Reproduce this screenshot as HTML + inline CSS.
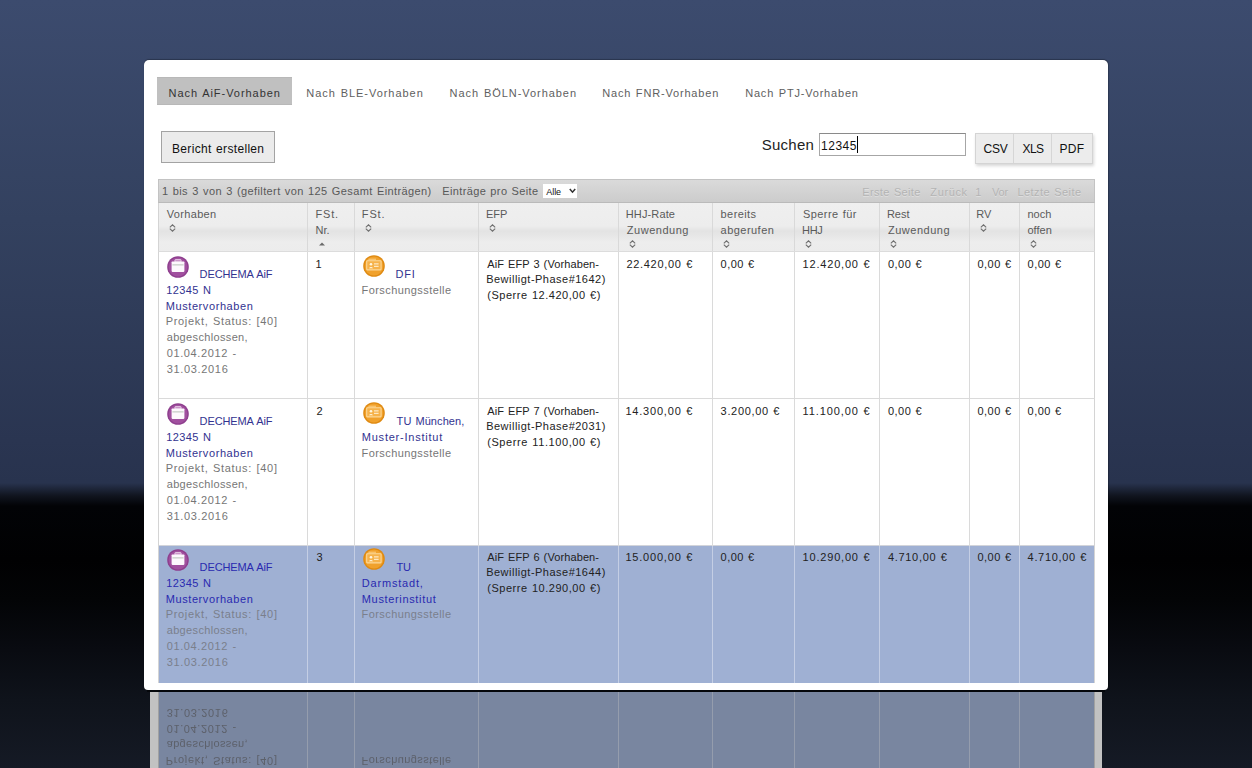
<!DOCTYPE html>
<html><head><meta charset="utf-8">
<style>
*{box-sizing:border-box}
html,body{margin:0;padding:0;width:1252px;height:768px;overflow:hidden}
body{position:relative;font-family:"Liberation Sans",sans-serif;
background:linear-gradient(to bottom,#3c4b6e 0px,#33415f 220px,#2a3551 440px,#28334e 483px,#10141e 496px,#020306 506px,#010102 560px,#030406 600px,#090b11 650px,#0f131b 700px,#151a25 768px)}
.tx{position:absolute;white-space:pre;line-height:20px;font-family:"Liberation Sans",sans-serif}
.bx{position:absolute}
.card{position:absolute;left:144px;top:60px;width:964px;height:630px;background:#fff;border-radius:5px 5px 4px 4px;box-shadow:0 -1px 1px rgba(0,0,0,.25),1px 0 1px rgba(0,0,0,.2)}
.refl{position:absolute;left:150px;top:692px;width:952px;height:76px;overflow:hidden;background:#fff;filter:brightness(.76) blur(.35px)}
</style></head><body>
<div class="card"></div>
<div class="bx" style="left:147px;top:690px;width:958px;height:2px;background:#05070b"></div>
<div class="bx" style="left:157px;top:77px;width:135px;height:28px;background:#c0c0c0;border-top:1px solid #b8b8b8;border-bottom:1px solid #b8b8b8"></div>
<div class="bx" style="left:161px;top:131px;width:114px;height:32px;border:1px solid #a3a3a3;background:#ebebeb"></div>
<div class="bx" style="left:819px;top:133px;width:147px;height:23px;border:1px solid #a6a6a6;border-top-color:#8a8a8a;background:#fff"></div>
<div class="bx" style="left:857px;top:136px;width:1px;height:17px;background:#000"></div>
<div class="bx" style="left:975px;top:133px;width:118px;height:31px;background:#ececec;border:1px solid #d4d4d4;box-shadow:1px 2px 3px rgba(0,0,0,.16)"></div>
<div class="bx" style="left:1013px;top:134px;width:1px;height:29px;background:#d6d6d6"></div>
<div class="bx" style="left:1051px;top:134px;width:1px;height:29px;background:#d6d6d6"></div>
<div class="bx" style="left:158px;top:179px;width:937px;height:24px;border:1px solid #c3c3c3;border-bottom-color:#bababa;background:linear-gradient(#dadada,#d3d3d3 50%,#cccccc)"></div>
<div class="bx" style="left:543px;top:184px;width:34px;height:14px;background:#fff"></div>
<svg class="bx" style="left:568.5px;top:188px" width="7" height="6" viewBox="0 0 7 6"><path d="M0.8 1L3.5 4.2L6.2 1" fill="none" stroke="#333" stroke-width="1.5"/></svg>
<div class="bx" style="left:158px;top:203px;width:937px;height:49px;background:linear-gradient(#efefef 0,#ededed 23px,#e3e3e3 28px,#e6e6e6 32px,#ededed 39px,#ececec 49px);border-left:1px solid #d4d4d4;border-right:1px solid #d4d4d4;border-bottom:1px solid #dcdcdc"></div>
<div class="bx" style="left:307px;top:203px;width:1px;height:48px;background:#d9d9d9"></div>
<div class="bx" style="left:354px;top:203px;width:1px;height:48px;background:#d9d9d9"></div>
<div class="bx" style="left:478px;top:203px;width:1px;height:48px;background:#d9d9d9"></div>
<div class="bx" style="left:618px;top:203px;width:1px;height:48px;background:#d9d9d9"></div>
<div class="bx" style="left:712px;top:203px;width:1px;height:48px;background:#d9d9d9"></div>
<div class="bx" style="left:794px;top:203px;width:1px;height:48px;background:#d9d9d9"></div>
<div class="bx" style="left:879px;top:203px;width:1px;height:48px;background:#d9d9d9"></div>
<div class="bx" style="left:969px;top:203px;width:1px;height:48px;background:#d9d9d9"></div>
<div class="bx" style="left:1019px;top:203px;width:1px;height:48px;background:#d9d9d9"></div>
<svg class="bx" style="left:169.1px;top:224px" width="7" height="8" viewBox="0 0 7 8"><path d="M0.8 3.3L3.5 0.8L6.2 3.3" fill="none" stroke="#6e6e6e" stroke-width="1.1"/><path d="M0.8 4.7L3.5 7.2L6.2 4.7" fill="none" stroke="#6e6e6e" stroke-width="1.1"/></svg>
<svg class="bx" style="left:319px;top:242px" width="6" height="4" viewBox="0 0 6 4"><path d="M0 3.6L3 0.4L6 3.6Z" fill="#6a6a6a"/></svg>
<svg class="bx" style="left:365.2px;top:224px" width="7" height="8" viewBox="0 0 7 8"><path d="M0.8 3.3L3.5 0.8L6.2 3.3" fill="none" stroke="#6e6e6e" stroke-width="1.1"/><path d="M0.8 4.7L3.5 7.2L6.2 4.7" fill="none" stroke="#6e6e6e" stroke-width="1.1"/></svg>
<svg class="bx" style="left:489.4px;top:224px" width="7" height="8" viewBox="0 0 7 8"><path d="M0.8 3.3L3.5 0.8L6.2 3.3" fill="none" stroke="#6e6e6e" stroke-width="1.1"/><path d="M0.8 4.7L3.5 7.2L6.2 4.7" fill="none" stroke="#6e6e6e" stroke-width="1.1"/></svg>
<svg class="bx" style="left:629.2px;top:240px" width="7" height="8" viewBox="0 0 7 8"><path d="M0.8 3.3L3.5 0.8L6.2 3.3" fill="none" stroke="#6e6e6e" stroke-width="1.1"/><path d="M0.8 4.7L3.5 7.2L6.2 4.7" fill="none" stroke="#6e6e6e" stroke-width="1.1"/></svg>
<svg class="bx" style="left:723.0px;top:240px" width="7" height="8" viewBox="0 0 7 8"><path d="M0.8 3.3L3.5 0.8L6.2 3.3" fill="none" stroke="#6e6e6e" stroke-width="1.1"/><path d="M0.8 4.7L3.5 7.2L6.2 4.7" fill="none" stroke="#6e6e6e" stroke-width="1.1"/></svg>
<svg class="bx" style="left:805.4px;top:240px" width="7" height="8" viewBox="0 0 7 8"><path d="M0.8 3.3L3.5 0.8L6.2 3.3" fill="none" stroke="#6e6e6e" stroke-width="1.1"/><path d="M0.8 4.7L3.5 7.2L6.2 4.7" fill="none" stroke="#6e6e6e" stroke-width="1.1"/></svg>
<svg class="bx" style="left:890.3px;top:240px" width="7" height="8" viewBox="0 0 7 8"><path d="M0.8 3.3L3.5 0.8L6.2 3.3" fill="none" stroke="#6e6e6e" stroke-width="1.1"/><path d="M0.8 4.7L3.5 7.2L6.2 4.7" fill="none" stroke="#6e6e6e" stroke-width="1.1"/></svg>
<svg class="bx" style="left:979.7px;top:224px" width="7" height="8" viewBox="0 0 7 8"><path d="M0.8 3.3L3.5 0.8L6.2 3.3" fill="none" stroke="#6e6e6e" stroke-width="1.1"/><path d="M0.8 4.7L3.5 7.2L6.2 4.7" fill="none" stroke="#6e6e6e" stroke-width="1.1"/></svg>
<svg class="bx" style="left:1029.9px;top:240px" width="7" height="8" viewBox="0 0 7 8"><path d="M0.8 3.3L3.5 0.8L6.2 3.3" fill="none" stroke="#6e6e6e" stroke-width="1.1"/><path d="M0.8 4.7L3.5 7.2L6.2 4.7" fill="none" stroke="#6e6e6e" stroke-width="1.1"/></svg>
<div class="bx" style="left:158px;top:252px;width:937px;height:147px;background:#fff;border-left:1px solid #d4d4d4;border-right:1px solid #d4d4d4;border-bottom:1px solid #dadada"></div>
<div class="bx" style="left:307px;top:252px;width:1px;height:147px;background:#dadada"></div>
<div class="bx" style="left:354px;top:252px;width:1px;height:147px;background:#dadada"></div>
<div class="bx" style="left:478px;top:252px;width:1px;height:147px;background:#dadada"></div>
<div class="bx" style="left:618px;top:252px;width:1px;height:147px;background:#dadada"></div>
<div class="bx" style="left:712px;top:252px;width:1px;height:147px;background:#dadada"></div>
<div class="bx" style="left:794px;top:252px;width:1px;height:147px;background:#dadada"></div>
<div class="bx" style="left:879px;top:252px;width:1px;height:147px;background:#dadada"></div>
<div class="bx" style="left:969px;top:252px;width:1px;height:147px;background:#dadada"></div>
<div class="bx" style="left:1019px;top:252px;width:1px;height:147px;background:#dadada"></div>
<div class="bx" style="left:166.8px;top:255.5px;width:22px;height:22px"><svg width="22" height="22" viewBox="0 0 22 22"><circle cx="11" cy="11" r="10.8" fill="#8e3f8e"/><circle cx="11" cy="11" r="9.4" fill="#a1509f"/><rect x="7.9" y="3.6" width="6.2" height="2.6" rx="0.7" fill="#c88fc6" stroke="#f0dff0" stroke-width="0.8"/><rect x="4.6" y="5.5" width="12.8" height="10.4" rx="0.8" fill="#fdf8fd"/><rect x="5.4" y="8.4" width="11.2" height="1" fill="#b8c0b8"/></svg></div>
<div class="bx" style="left:362.8px;top:255.3px;width:22px;height:22px"><svg width="22" height="22" viewBox="0 0 22 22"><circle cx="11" cy="11" r="10.8" fill="#df8a12"/><circle cx="11" cy="11" r="9.4" fill="#f0a12c"/><rect x="5.4" y="3.6" width="7.6" height="1.7" fill="#f9c26a"/><rect x="3.7" y="5.7" width="14.4" height="9.2" rx="0.6" fill="#f6b24a" stroke="#fcd898" stroke-width="1.1"/><circle cx="8" cy="9.2" r="1.3" fill="#fff6e0"/><path d="M5.9 13.2Q8 10.6 10.1 13.2Z" fill="#fff6e0"/><rect x="11" y="8.4" width="4.6" height="1" fill="#fff6e0"/><rect x="11" y="10.8" width="4.6" height="1" fill="#fff6e0"/></svg></div>
<div class="tx" style="left:199.6px;top:264px;font-size:11px;color:#323290;letter-spacing:-0.120px;word-spacing:0.8px;">DECHEMA AiF</div>
<div class="tx" style="left:166.2px;top:280px;font-size:11px;color:#323290;letter-spacing:0.400px;word-spacing:0.8px;">12345 N</div>
<div class="tx" style="left:165.7px;top:296px;font-size:11px;color:#323290;letter-spacing:0.592px;word-spacing:0.8px;">Mustervorhaben</div>
<div class="tx" style="left:165.7px;top:311px;font-size:11px;color:#767676;letter-spacing:0.685px;word-spacing:0.8px;">Projekt, Status: [40]</div>
<div class="tx" style="left:166.7px;top:327px;font-size:11px;color:#767676;letter-spacing:0.346px;word-spacing:0.8px;">abgeschlossen,</div>
<div class="tx" style="left:166.7px;top:343px;font-size:11px;color:#767676;letter-spacing:0.618px;word-spacing:0.8px;">01.04.2012 -</div>
<div class="tx" style="left:166.7px;top:359px;font-size:11px;color:#767676;letter-spacing:0.667px;word-spacing:0.8px;">31.03.2016</div>
<div class="tx" style="left:315.6px;top:254px;font-size:11px;color:#222;letter-spacing:0.000px;word-spacing:0.8px;">1</div>
<div class="tx" style="left:395.6px;top:264px;font-size:11px;color:#323290;letter-spacing:0.800px;word-spacing:0.8px;">DFI</div>
<div class="tx" style="left:361.6px;top:280px;font-size:11px;color:#767676;letter-spacing:0.420px;word-spacing:0.8px;">Forschungsstelle</div>
<div class="tx" style="left:487.2px;top:254px;font-size:11px;color:#222;letter-spacing:0.105px;word-spacing:0.8px;">AiF EFP 3 (Vorhaben-</div>
<div class="tx" style="left:486.2px;top:269px;font-size:11px;color:#222;letter-spacing:0.485px;word-spacing:0.8px;">Bewilligt-Phase#1642)</div>
<div class="tx" style="left:487.2px;top:285px;font-size:11px;color:#222;letter-spacing:0.526px;word-spacing:0.8px;">(Sperre 12.420,00 €)</div>
<div class="tx" style="left:626.4px;top:254px;font-size:11px;color:#222;letter-spacing:0.704px;word-spacing:0.8px;">22.420,00 €</div>
<div class="tx" style="left:720.6px;top:254px;font-size:11px;color:#222;letter-spacing:0.452px;word-spacing:0.8px;">0,00 €</div>
<div class="tx" style="left:802.6px;top:254px;font-size:11px;color:#222;letter-spacing:0.804px;word-spacing:0.8px;">12.420,00 €</div>
<div class="tx" style="left:888.0px;top:254px;font-size:11px;color:#222;letter-spacing:0.452px;word-spacing:0.8px;">0,00 €</div>
<div class="tx" style="left:977.5px;top:254px;font-size:11px;color:#222;letter-spacing:0.452px;word-spacing:0.8px;">0,00 €</div>
<div class="tx" style="left:1027.6px;top:254px;font-size:11px;color:#222;letter-spacing:0.452px;word-spacing:0.8px;">0,00 €</div>
<div class="bx" style="left:158px;top:399px;width:937px;height:147px;background:#fff;border-left:1px solid #d4d4d4;border-right:1px solid #d4d4d4;border-bottom:1px solid #d2d4da"></div>
<div class="bx" style="left:307px;top:399px;width:1px;height:147px;background:#dadada"></div>
<div class="bx" style="left:354px;top:399px;width:1px;height:147px;background:#dadada"></div>
<div class="bx" style="left:478px;top:399px;width:1px;height:147px;background:#dadada"></div>
<div class="bx" style="left:618px;top:399px;width:1px;height:147px;background:#dadada"></div>
<div class="bx" style="left:712px;top:399px;width:1px;height:147px;background:#dadada"></div>
<div class="bx" style="left:794px;top:399px;width:1px;height:147px;background:#dadada"></div>
<div class="bx" style="left:879px;top:399px;width:1px;height:147px;background:#dadada"></div>
<div class="bx" style="left:969px;top:399px;width:1px;height:147px;background:#dadada"></div>
<div class="bx" style="left:1019px;top:399px;width:1px;height:147px;background:#dadada"></div>
<div class="bx" style="left:166.8px;top:402.5px;width:22px;height:22px"><svg width="22" height="22" viewBox="0 0 22 22"><circle cx="11" cy="11" r="10.8" fill="#8e3f8e"/><circle cx="11" cy="11" r="9.4" fill="#a1509f"/><rect x="7.9" y="3.6" width="6.2" height="2.6" rx="0.7" fill="#c88fc6" stroke="#f0dff0" stroke-width="0.8"/><rect x="4.6" y="5.5" width="12.8" height="10.4" rx="0.8" fill="#fdf8fd"/><rect x="5.4" y="8.4" width="11.2" height="1" fill="#b8c0b8"/></svg></div>
<div class="bx" style="left:362.8px;top:402.3px;width:22px;height:22px"><svg width="22" height="22" viewBox="0 0 22 22"><circle cx="11" cy="11" r="10.8" fill="#df8a12"/><circle cx="11" cy="11" r="9.4" fill="#f0a12c"/><rect x="5.4" y="3.6" width="7.6" height="1.7" fill="#f9c26a"/><rect x="3.7" y="5.7" width="14.4" height="9.2" rx="0.6" fill="#f6b24a" stroke="#fcd898" stroke-width="1.1"/><circle cx="8" cy="9.2" r="1.3" fill="#fff6e0"/><path d="M5.9 13.2Q8 10.6 10.1 13.2Z" fill="#fff6e0"/><rect x="11" y="8.4" width="4.6" height="1" fill="#fff6e0"/><rect x="11" y="10.8" width="4.6" height="1" fill="#fff6e0"/></svg></div>
<div class="tx" style="left:199.6px;top:411px;font-size:11px;color:#323290;letter-spacing:-0.120px;word-spacing:0.8px;">DECHEMA AiF</div>
<div class="tx" style="left:166.2px;top:427px;font-size:11px;color:#323290;letter-spacing:0.400px;word-spacing:0.8px;">12345 N</div>
<div class="tx" style="left:165.7px;top:443px;font-size:11px;color:#323290;letter-spacing:0.592px;word-spacing:0.8px;">Mustervorhaben</div>
<div class="tx" style="left:165.7px;top:458px;font-size:11px;color:#767676;letter-spacing:0.685px;word-spacing:0.8px;">Projekt, Status: [40]</div>
<div class="tx" style="left:166.7px;top:474px;font-size:11px;color:#767676;letter-spacing:0.346px;word-spacing:0.8px;">abgeschlossen,</div>
<div class="tx" style="left:166.7px;top:490px;font-size:11px;color:#767676;letter-spacing:0.618px;word-spacing:0.8px;">01.04.2012 -</div>
<div class="tx" style="left:166.7px;top:506px;font-size:11px;color:#767676;letter-spacing:0.667px;word-spacing:0.8px;">31.03.2016</div>
<div class="tx" style="left:316.6px;top:401px;font-size:11px;color:#222;letter-spacing:0.000px;word-spacing:0.8px;">2</div>
<div class="tx" style="left:396.6px;top:411px;font-size:11px;color:#323290;letter-spacing:0.090px;word-spacing:0.8px;">TU München,</div>
<div class="tx" style="left:361.8px;top:427px;font-size:11px;color:#323290;letter-spacing:0.771px;word-spacing:0.8px;">Muster-Institut</div>
<div class="tx" style="left:361.6px;top:443px;font-size:11px;color:#767676;letter-spacing:0.420px;word-spacing:0.8px;">Forschungsstelle</div>
<div class="tx" style="left:487.2px;top:401px;font-size:11px;color:#222;letter-spacing:0.105px;word-spacing:0.8px;">AiF EFP 7 (Vorhaben-</div>
<div class="tx" style="left:486.2px;top:416px;font-size:11px;color:#222;letter-spacing:0.485px;word-spacing:0.8px;">Bewilligt-Phase#2031)</div>
<div class="tx" style="left:487.2px;top:432px;font-size:11px;color:#222;letter-spacing:0.579px;word-spacing:0.8px;">(Sperre 11.100,00 €)</div>
<div class="tx" style="left:625.4px;top:401px;font-size:11px;color:#222;letter-spacing:0.804px;word-spacing:0.8px;">14.300,00 €</div>
<div class="tx" style="left:720.6px;top:401px;font-size:11px;color:#222;letter-spacing:0.674px;word-spacing:0.8px;">3.200,00 €</div>
<div class="tx" style="left:802.6px;top:401px;font-size:11px;color:#222;letter-spacing:0.904px;word-spacing:0.8px;">11.100,00 €</div>
<div class="tx" style="left:888.0px;top:401px;font-size:11px;color:#222;letter-spacing:0.452px;word-spacing:0.8px;">0,00 €</div>
<div class="tx" style="left:977.5px;top:401px;font-size:11px;color:#222;letter-spacing:0.452px;word-spacing:0.8px;">0,00 €</div>
<div class="tx" style="left:1027.6px;top:401px;font-size:11px;color:#222;letter-spacing:0.452px;word-spacing:0.8px;">0,00 €</div>
<div class="bx" style="left:158px;top:546px;width:937px;height:137px;background:#9fb0d3;border-left:1px solid #d4d4d4;border-right:1px solid #d4d4d4;"></div>
<div class="bx" style="left:307px;top:546px;width:1px;height:137px;background:#c4cee4"></div>
<div class="bx" style="left:354px;top:546px;width:1px;height:137px;background:#c4cee4"></div>
<div class="bx" style="left:478px;top:546px;width:1px;height:137px;background:#c4cee4"></div>
<div class="bx" style="left:618px;top:546px;width:1px;height:137px;background:#c4cee4"></div>
<div class="bx" style="left:712px;top:546px;width:1px;height:137px;background:#c4cee4"></div>
<div class="bx" style="left:794px;top:546px;width:1px;height:137px;background:#c4cee4"></div>
<div class="bx" style="left:879px;top:546px;width:1px;height:137px;background:#c4cee4"></div>
<div class="bx" style="left:969px;top:546px;width:1px;height:137px;background:#c4cee4"></div>
<div class="bx" style="left:1019px;top:546px;width:1px;height:137px;background:#c4cee4"></div>
<div class="bx" style="left:166.8px;top:548.5px;width:22px;height:22px"><svg width="22" height="22" viewBox="0 0 22 22"><circle cx="11" cy="11" r="10.8" fill="#8e3f8e"/><circle cx="11" cy="11" r="9.4" fill="#a1509f"/><rect x="7.9" y="3.6" width="6.2" height="2.6" rx="0.7" fill="#c88fc6" stroke="#f0dff0" stroke-width="0.8"/><rect x="4.6" y="5.5" width="12.8" height="10.4" rx="0.8" fill="#fdf8fd"/><rect x="5.4" y="8.4" width="11.2" height="1" fill="#b8c0b8"/></svg></div>
<div class="bx" style="left:362.8px;top:548.3px;width:22px;height:22px"><svg width="22" height="22" viewBox="0 0 22 22"><circle cx="11" cy="11" r="10.8" fill="#df8a12"/><circle cx="11" cy="11" r="9.4" fill="#f0a12c"/><rect x="5.4" y="3.6" width="7.6" height="1.7" fill="#f9c26a"/><rect x="3.7" y="5.7" width="14.4" height="9.2" rx="0.6" fill="#f6b24a" stroke="#fcd898" stroke-width="1.1"/><circle cx="8" cy="9.2" r="1.3" fill="#fff6e0"/><path d="M5.9 13.2Q8 10.6 10.1 13.2Z" fill="#fff6e0"/><rect x="11" y="8.4" width="4.6" height="1" fill="#fff6e0"/><rect x="11" y="10.8" width="4.6" height="1" fill="#fff6e0"/></svg></div>
<div class="tx" style="left:199.6px;top:557px;font-size:11px;color:#2a2ab0;letter-spacing:-0.120px;word-spacing:0.8px;">DECHEMA AiF</div>
<div class="tx" style="left:166.2px;top:573px;font-size:11px;color:#2a2ab0;letter-spacing:0.400px;word-spacing:0.8px;">12345 N</div>
<div class="tx" style="left:165.7px;top:589px;font-size:11px;color:#2a2ab0;letter-spacing:0.592px;word-spacing:0.8px;">Mustervorhaben</div>
<div class="tx" style="left:165.7px;top:604px;font-size:11px;color:#7a7f8c;letter-spacing:0.685px;word-spacing:0.8px;">Projekt, Status: [40]</div>
<div class="tx" style="left:166.7px;top:620px;font-size:11px;color:#7a7f8c;letter-spacing:0.346px;word-spacing:0.8px;">abgeschlossen,</div>
<div class="tx" style="left:166.7px;top:636px;font-size:11px;color:#7a7f8c;letter-spacing:0.618px;word-spacing:0.8px;">01.04.2012 -</div>
<div class="tx" style="left:166.7px;top:652px;font-size:11px;color:#7a7f8c;letter-spacing:0.667px;word-spacing:0.8px;">31.03.2016</div>
<div class="tx" style="left:316.6px;top:547px;font-size:11px;color:#222;letter-spacing:0.000px;word-spacing:0.8px;">3</div>
<div class="tx" style="left:396.6px;top:557px;font-size:11px;color:#2a2ab0;letter-spacing:-0.300px;word-spacing:0.8px;">TU</div>
<div class="tx" style="left:361.8px;top:573px;font-size:11px;color:#2a2ab0;letter-spacing:0.811px;word-spacing:0.8px;">Darmstadt,</div>
<div class="tx" style="left:361.8px;top:589px;font-size:11px;color:#2a2ab0;letter-spacing:0.654px;word-spacing:0.8px;">Musterinstitut</div>
<div class="tx" style="left:361.6px;top:604px;font-size:11px;color:#7a7f8c;letter-spacing:0.420px;word-spacing:0.8px;">Forschungsstelle</div>
<div class="tx" style="left:487.2px;top:547px;font-size:11px;color:#222;letter-spacing:0.105px;word-spacing:0.8px;">AiF EFP 6 (Vorhaben-</div>
<div class="tx" style="left:486.2px;top:562px;font-size:11px;color:#222;letter-spacing:0.485px;word-spacing:0.8px;">Bewilligt-Phase#1644)</div>
<div class="tx" style="left:487.2px;top:578px;font-size:11px;color:#222;letter-spacing:0.526px;word-spacing:0.8px;">(Sperre 10.290,00 €)</div>
<div class="tx" style="left:625.4px;top:547px;font-size:11px;color:#222;letter-spacing:0.804px;word-spacing:0.8px;">15.000,00 €</div>
<div class="tx" style="left:720.6px;top:547px;font-size:11px;color:#222;letter-spacing:0.452px;word-spacing:0.8px;">0,00 €</div>
<div class="tx" style="left:802.6px;top:547px;font-size:11px;color:#222;letter-spacing:0.804px;word-spacing:0.8px;">10.290,00 €</div>
<div class="tx" style="left:888.0px;top:547px;font-size:11px;color:#222;letter-spacing:0.674px;word-spacing:0.8px;">4.710,00 €</div>
<div class="tx" style="left:977.5px;top:547px;font-size:11px;color:#222;letter-spacing:0.452px;word-spacing:0.8px;">0,00 €</div>
<div class="tx" style="left:1027.6px;top:547px;font-size:11px;color:#222;letter-spacing:0.674px;word-spacing:0.8px;">4.710,00 €</div>
<div class="refl"><div class="bx" style="left:-150px;top:0;width:1252px;height:137px;transform:scaleY(-1);transform-origin:0 68.5px"><div class="bx" style="left:158px;top:0px;width:937px;height:137px;background:#9fb0d3;border-left:1px solid #d4d4d4;border-right:1px solid #d4d4d4;"></div>
<div class="bx" style="left:307px;top:0px;width:1px;height:137px;background:#c4cee4"></div>
<div class="bx" style="left:354px;top:0px;width:1px;height:137px;background:#c4cee4"></div>
<div class="bx" style="left:478px;top:0px;width:1px;height:137px;background:#c4cee4"></div>
<div class="bx" style="left:618px;top:0px;width:1px;height:137px;background:#c4cee4"></div>
<div class="bx" style="left:712px;top:0px;width:1px;height:137px;background:#c4cee4"></div>
<div class="bx" style="left:794px;top:0px;width:1px;height:137px;background:#c4cee4"></div>
<div class="bx" style="left:879px;top:0px;width:1px;height:137px;background:#c4cee4"></div>
<div class="bx" style="left:969px;top:0px;width:1px;height:137px;background:#c4cee4"></div>
<div class="bx" style="left:1019px;top:0px;width:1px;height:137px;background:#c4cee4"></div>
<div class="bx" style="left:166.8px;top:2.5px;width:22px;height:22px"><svg width="22" height="22" viewBox="0 0 22 22"><circle cx="11" cy="11" r="10.8" fill="#8e3f8e"/><circle cx="11" cy="11" r="9.4" fill="#a1509f"/><rect x="7.9" y="3.6" width="6.2" height="2.6" rx="0.7" fill="#c88fc6" stroke="#f0dff0" stroke-width="0.8"/><rect x="4.6" y="5.5" width="12.8" height="10.4" rx="0.8" fill="#fdf8fd"/><rect x="5.4" y="8.4" width="11.2" height="1" fill="#b8c0b8"/></svg></div>
<div class="bx" style="left:362.8px;top:2.2999999999999545px;width:22px;height:22px"><svg width="22" height="22" viewBox="0 0 22 22"><circle cx="11" cy="11" r="10.8" fill="#df8a12"/><circle cx="11" cy="11" r="9.4" fill="#f0a12c"/><rect x="5.4" y="3.6" width="7.6" height="1.7" fill="#f9c26a"/><rect x="3.7" y="5.7" width="14.4" height="9.2" rx="0.6" fill="#f6b24a" stroke="#fcd898" stroke-width="1.1"/><circle cx="8" cy="9.2" r="1.3" fill="#fff6e0"/><path d="M5.9 13.2Q8 10.6 10.1 13.2Z" fill="#fff6e0"/><rect x="11" y="8.4" width="4.6" height="1" fill="#fff6e0"/><rect x="11" y="10.8" width="4.6" height="1" fill="#fff6e0"/></svg></div>
<div class="tx" style="left:199.6px;top:11px;font-size:11px;color:#2a2ab0;letter-spacing:-0.120px;word-spacing:0.8px;">DECHEMA AiF</div>
<div class="tx" style="left:166.2px;top:27px;font-size:11px;color:#2a2ab0;letter-spacing:0.400px;word-spacing:0.8px;">12345 N</div>
<div class="tx" style="left:165.7px;top:43px;font-size:11px;color:#2a2ab0;letter-spacing:0.592px;word-spacing:0.8px;">Mustervorhaben</div>
<div class="tx" style="left:165.7px;top:58px;font-size:11px;color:#7a7f8c;letter-spacing:0.685px;word-spacing:0.8px;">Projekt, Status: [40]</div>
<div class="tx" style="left:166.7px;top:74px;font-size:11px;color:#7a7f8c;letter-spacing:0.346px;word-spacing:0.8px;">abgeschlossen,</div>
<div class="tx" style="left:166.7px;top:90px;font-size:11px;color:#7a7f8c;letter-spacing:0.618px;word-spacing:0.8px;">01.04.2012 -</div>
<div class="tx" style="left:166.7px;top:106px;font-size:11px;color:#7a7f8c;letter-spacing:0.667px;word-spacing:0.8px;">31.03.2016</div>
<div class="tx" style="left:316.6px;top:1px;font-size:11px;color:#222;letter-spacing:0.000px;word-spacing:0.8px;">3</div>
<div class="tx" style="left:396.6px;top:11px;font-size:11px;color:#2a2ab0;letter-spacing:-0.300px;word-spacing:0.8px;">TU</div>
<div class="tx" style="left:361.8px;top:27px;font-size:11px;color:#2a2ab0;letter-spacing:0.811px;word-spacing:0.8px;">Darmstadt,</div>
<div class="tx" style="left:361.8px;top:43px;font-size:11px;color:#2a2ab0;letter-spacing:0.654px;word-spacing:0.8px;">Musterinstitut</div>
<div class="tx" style="left:361.6px;top:58px;font-size:11px;color:#7a7f8c;letter-spacing:0.420px;word-spacing:0.8px;">Forschungsstelle</div>
<div class="tx" style="left:487.2px;top:1px;font-size:11px;color:#222;letter-spacing:0.105px;word-spacing:0.8px;">AiF EFP 6 (Vorhaben-</div>
<div class="tx" style="left:486.2px;top:16px;font-size:11px;color:#222;letter-spacing:0.485px;word-spacing:0.8px;">Bewilligt-Phase#1644)</div>
<div class="tx" style="left:487.2px;top:32px;font-size:11px;color:#222;letter-spacing:0.526px;word-spacing:0.8px;">(Sperre 10.290,00 €)</div>
<div class="tx" style="left:625.4px;top:1px;font-size:11px;color:#222;letter-spacing:0.804px;word-spacing:0.8px;">15.000,00 €</div>
<div class="tx" style="left:720.6px;top:1px;font-size:11px;color:#222;letter-spacing:0.452px;word-spacing:0.8px;">0,00 €</div>
<div class="tx" style="left:802.6px;top:1px;font-size:11px;color:#222;letter-spacing:0.804px;word-spacing:0.8px;">10.290,00 €</div>
<div class="tx" style="left:888.0px;top:1px;font-size:11px;color:#222;letter-spacing:0.674px;word-spacing:0.8px;">4.710,00 €</div>
<div class="tx" style="left:977.5px;top:1px;font-size:11px;color:#222;letter-spacing:0.452px;word-spacing:0.8px;">0,00 €</div>
<div class="tx" style="left:1027.6px;top:1px;font-size:11px;color:#222;letter-spacing:0.674px;word-spacing:0.8px;">4.710,00 €</div></div></div>
<div class="tx" style="left:168.5px;top:83px;font-size:11px;color:#333;letter-spacing:0.950px;word-spacing:0.8px;">Nach AiF-Vorhaben</div>
<div class="tx" style="left:306.3px;top:83px;font-size:11px;color:#606060;letter-spacing:0.963px;word-spacing:0.8px;">Nach BLE-Vorhaben</div>
<div class="tx" style="left:449.6px;top:83px;font-size:11px;color:#606060;letter-spacing:0.953px;word-spacing:0.8px;">Nach BÖLN-Vorhaben</div>
<div class="tx" style="left:602.2px;top:83px;font-size:11px;color:#606060;letter-spacing:0.825px;word-spacing:0.8px;">Nach FNR-Vorhaben</div>
<div class="tx" style="left:745.2px;top:83px;font-size:11px;color:#606060;letter-spacing:0.806px;word-spacing:0.8px;">Nach PTJ-Vorhaben</div>
<div class="tx" style="left:172.0px;top:139px;font-size:12px;color:#111;letter-spacing:0.325px;word-spacing:0.8px;">Bericht erstellen</div>
<div class="tx" style="left:761.7px;top:135px;font-size:15px;color:#222;letter-spacing:0.260px;word-spacing:0px;">Suchen</div>
<div class="tx" style="left:821.1px;top:136px;font-size:12px;color:#111;letter-spacing:0.500px;word-spacing:0.8px;">12345</div>
<div class="tx" style="left:983.5px;top:139px;font-size:12px;color:#111;letter-spacing:-0.250px;word-spacing:0.8px;">CSV</div>
<div class="tx" style="left:1022.6px;top:139px;font-size:12px;color:#111;letter-spacing:-0.600px;word-spacing:0.8px;">XLS</div>
<div class="tx" style="left:1059.6px;top:139px;font-size:12px;color:#111;letter-spacing:0.250px;word-spacing:0.8px;">PDF</div>
<div class="tx" style="left:162px;top:181px;font-size:11px;color:#585858;letter-spacing:0.394px;word-spacing:0.8px;">1 bis 3 von 3 (gefiltert von 125 Gesamt Einträgen)</div>
<div class="tx" style="left:442.2px;top:181px;font-size:11px;color:#585858;letter-spacing:0.371px;word-spacing:0.8px;">Einträge pro Seite</div>
<div class="tx" style="left:546.3px;top:182px;font-size:9px;color:#111;letter-spacing:-0.067px;word-spacing:0.8px;">Alle</div>
<div class="tx" style="left:862.2px;top:182px;font-size:11px;color:#b4b4b4;letter-spacing:0.360px;word-spacing:0.8px;text-shadow:0 1px 0 rgba(255,255,255,.35)">Erste Seite</div>
<div class="tx" style="left:930.3px;top:182px;font-size:11px;color:#b4b4b4;letter-spacing:0.640px;word-spacing:0.8px;text-shadow:0 1px 0 rgba(255,255,255,.35)">Zurück</div>
<div class="tx" style="left:975.3px;top:182px;font-size:11px;color:#b4b4b4;letter-spacing:0.000px;word-spacing:0.8px;text-shadow:0 1px 0 rgba(255,255,255,.35)">1</div>
<div class="tx" style="left:992px;top:182px;font-size:11px;color:#b4b4b4;letter-spacing:-0.200px;word-spacing:0.8px;text-shadow:0 1px 0 rgba(255,255,255,.35)">Vor</div>
<div class="tx" style="left:1017.4px;top:182px;font-size:11px;color:#b4b4b4;letter-spacing:0.436px;word-spacing:0.8px;text-shadow:0 1px 0 rgba(255,255,255,.35)">Letzte Seite</div>
<div class="tx" style="left:166.7px;top:204px;font-size:11px;color:#5a5a5a;letter-spacing:0.343px;word-spacing:0.8px;">Vorhaben</div>
<div class="tx" style="left:315.5px;top:204px;font-size:11px;color:#5a5a5a;letter-spacing:0.833px;word-spacing:0.8px;">FSt.</div>
<div class="tx" style="left:315.5px;top:220px;font-size:11px;color:#5a5a5a;letter-spacing:0.000px;word-spacing:0.8px;">Nr.</div>
<div class="tx" style="left:361.8px;top:204px;font-size:11px;color:#5a5a5a;letter-spacing:0.867px;word-spacing:0.8px;">FSt.</div>
<div class="tx" style="left:486.0px;top:204px;font-size:11px;color:#5a5a5a;letter-spacing:0.000px;word-spacing:0.8px;">EFP</div>
<div class="tx" style="left:625.8px;top:204px;font-size:11px;color:#5a5a5a;letter-spacing:0.129px;word-spacing:0.8px;">HHJ-Rate</div>
<div class="tx" style="left:626.8px;top:220px;font-size:11px;color:#5a5a5a;letter-spacing:0.525px;word-spacing:0.8px;">Zuwendung</div>
<div class="tx" style="left:720.6px;top:204px;font-size:11px;color:#5a5a5a;letter-spacing:0.400px;word-spacing:0.8px;">bereits</div>
<div class="tx" style="left:720.6px;top:220px;font-size:11px;color:#5a5a5a;letter-spacing:0.463px;word-spacing:0.8px;">abgerufen</div>
<div class="tx" style="left:803.0px;top:204px;font-size:11px;color:#5a5a5a;letter-spacing:0.411px;word-spacing:0.8px;">Sperre für</div>
<div class="tx" style="left:802.0px;top:220px;font-size:11px;color:#5a5a5a;letter-spacing:-0.300px;word-spacing:0.8px;">HHJ</div>
<div class="tx" style="left:886.9px;top:204px;font-size:11px;color:#5a5a5a;letter-spacing:0.000px;word-spacing:0.8px;">Rest</div>
<div class="tx" style="left:887.9px;top:220px;font-size:11px;color:#5a5a5a;letter-spacing:0.525px;word-spacing:0.8px;">Zuwendung</div>
<div class="tx" style="left:976.3px;top:204px;font-size:11px;color:#5a5a5a;letter-spacing:0.000px;word-spacing:0.8px;">RV</div>
<div class="tx" style="left:1027.5px;top:204px;font-size:11px;color:#5a5a5a;letter-spacing:0.000px;word-spacing:0.8px;">noch</div>
<div class="tx" style="left:1027.5px;top:220px;font-size:11px;color:#5a5a5a;letter-spacing:0.000px;word-spacing:0.8px;">offen</div>
</body></html>
